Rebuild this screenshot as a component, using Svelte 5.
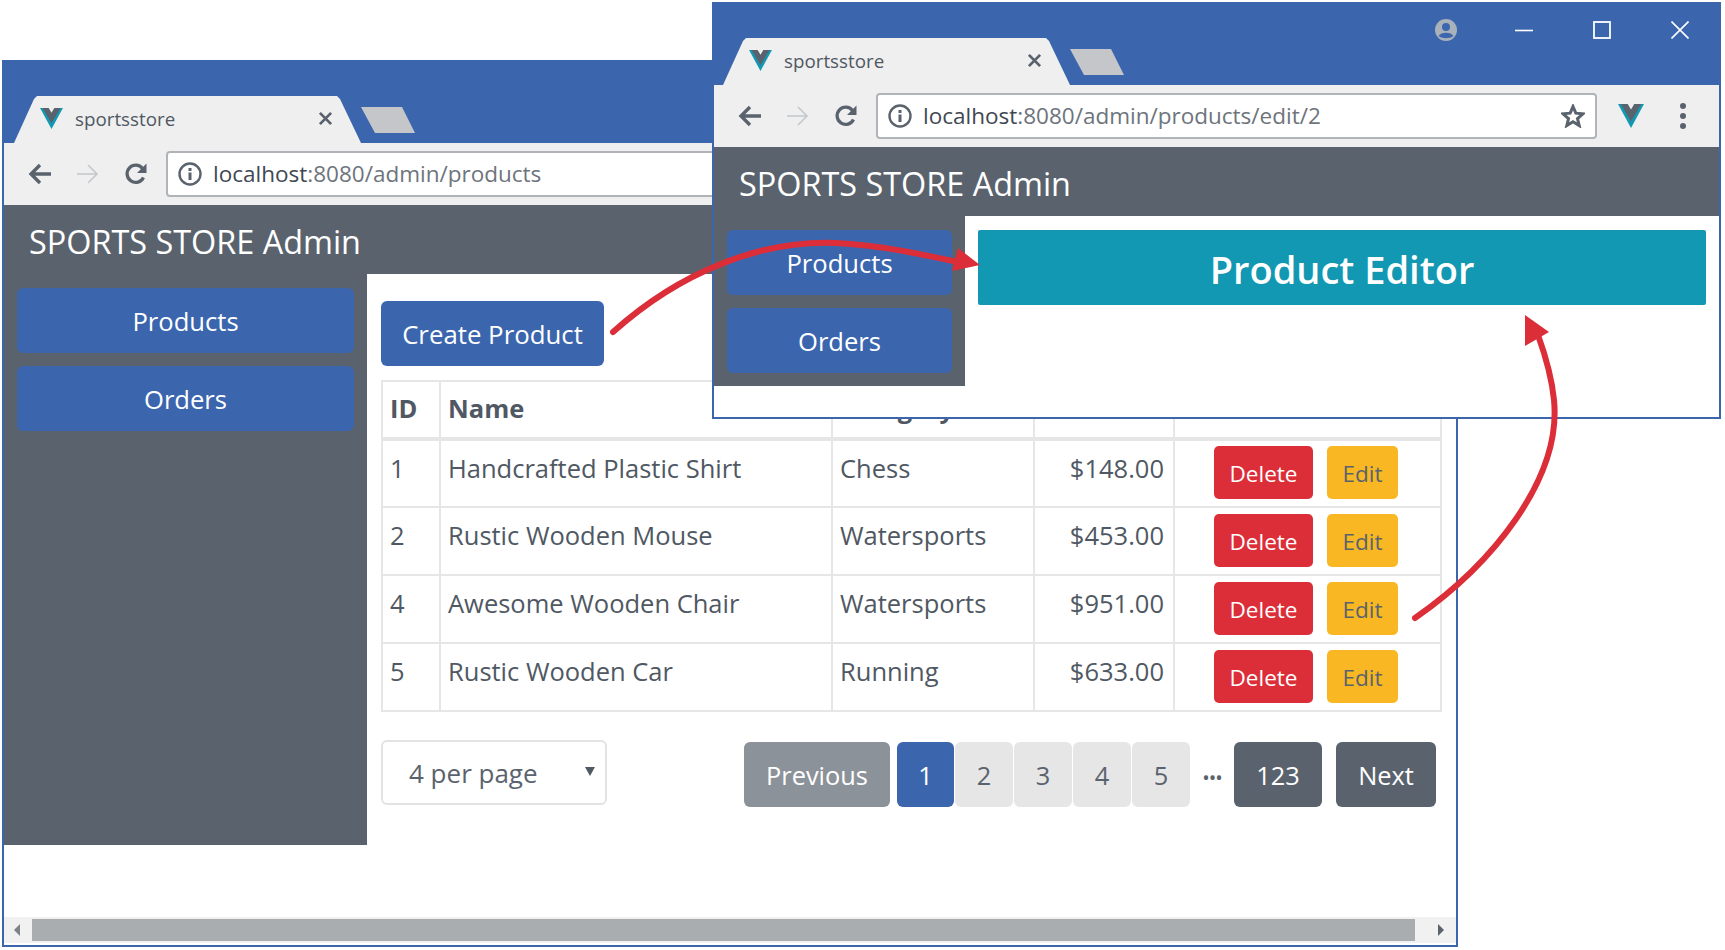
<script>
  const rows = [
    { id: 1, name: 'Handcrafted Plastic Shirt', category: 'Chess', price: '$148.00' },
    { id: 2, name: 'Rustic Wooden Mouse', category: 'Watersports', price: '$453.00' },
    { id: 4, name: 'Awesome Wooden Chair', category: 'Watersports', price: '$951.00' },
    { id: 5, name: 'Rustic Wooden Car', category: 'Running', price: '$633.00' }
  ];
</script>

{#snippet vue(cls)}
  <svg class={cls} viewBox="0 0 24 22">
    <path d="M0 0H8L12 7L16 0H24L12 22Z" fill="#1298b2" />
    <path d="M2.5 0H9L12 5L15 0H21.5L12 16Z" fill="#5a636d" />
  </svg>
{/snippet}

{#snippet chrome(host, path)}
  <div class="titlebar">
    <div class="tab">
      {@render vue('favicon')}
      <span class="tabtitle">sportsstore</span>
      <svg class="tabclose" viewBox="0 0 16 16"><path d="M2 2L14 14M14 2L2 14" stroke="#5a636d" stroke-width="3" /></svg>
    </div>
    <div class="newtab"></div>
    <div class="caption">
      <svg class="cap-account" viewBox="0 0 22 22">
        <circle cx="11" cy="11" r="11" fill="#a9b1bb" />
        <circle cx="11" cy="8" r="4" fill="#3b66ae" />
        <path d="M3.5 17C6 12.5 16 12.5 18.5 17C14 20 8 20 3.5 17Z" fill="#3b66ae" />
      </svg>
      <svg class="cap-btn" viewBox="0 0 18 18"><path d="M0 9.5H18" stroke="#fff" stroke-width="1.6" /></svg>
      <svg class="cap-btn" viewBox="0 0 18 18"><rect x="1" y="1" width="16" height="16" fill="none" stroke="#fff" stroke-width="1.8" /></svg>
      <svg class="cap-btn" viewBox="0 0 18 18"><path d="M0.5 0.5L17.5 17.5M17.5 0.5L0.5 17.5" stroke="#fff" stroke-width="1.6" /></svg>
    </div>
  </div>
  <div class="toolbar">
    <svg class="tool" viewBox="0 0 24 24"><path d="M23 12H4M12 3L3 12L12 21" fill="none" stroke="#5a636d" stroke-width="3.4" /></svg>
    <svg class="tool" viewBox="0 0 24 24"><path d="M1 12H20M12 3L21 12L12 21" fill="none" stroke="#c4c8cc" stroke-width="1.6" /></svg>
    <svg class="tool" viewBox="0 0 24 24">
      <path d="M19.5 15.5A8.6 8.6 0 1 1 18.5 6.5" fill="none" stroke="#5a636d" stroke-width="3.2" />
      <path d="M22.5 1.5V11H13Z" fill="#5a636d" />
    </svg>
    <div class="address">
      <svg class="info" viewBox="0 0 24 24">
        <circle cx="12" cy="12" r="10.5" fill="none" stroke="#5a636d" stroke-width="2.4" />
        <rect x="10.5" y="10.5" width="3" height="7.5" fill="#5a636d" />
        <rect x="10.5" y="6" width="3" height="3" fill="#5a636d" />
      </svg>
      <span class="url"><span class="host">{host}</span>{path}</span>
      <svg class="star" viewBox="0 0 24 24"><path d="M12 2.5L14.8 9.2L22 9.8L16.5 14.5L18.2 21.6L12 17.8L5.8 21.6L7.5 14.5L2 9.8L9.2 9.2Z" fill="none" stroke="#5a636d" stroke-width="3" /></svg>
    </div>
    {@render vue('ext')}
    <div class="menu"><i></i><i></i><i></i></div>
  </div>
  <header class="brand">SPORTS STORE Admin</header>
{/snippet}

{#snippet nav()}
  <nav class="side">
    <button class="navbtn">Products</button>
    <button class="navbtn">Orders</button>
  </nav>
{/snippet}

<div class="canvas">
  <section class="window back">
    {@render chrome('localhost', ':8080/admin/products')}
    <div class="body">
      {@render nav()}
      <main class="main">
        <button class="create">Create Product</button>
        <table>
          <colgroup>
            <col class="c1" /><col class="c2" /><col class="c3" /><col class="c4" /><col class="c5" />
          </colgroup>
          <thead>
            <tr><th>ID</th><th>Name</th><th>Category</th><th class="right">Price</th><th></th></tr>
          </thead>
          <tbody>
            {#each rows as r}
              <tr>
                <td>{r.id}</td>
                <td>{r.name}</td>
                <td>{r.category}</td>
                <td class="right">{r.price}</td>
                <td class="actions">
                  <button class="del">Delete</button>
                  <button class="edit">Edit</button>
                </td>
              </tr>
            {/each}
          </tbody>
        </table>
        <div class="footer">
          <div class="select">4 per page<span class="caret"></span></div>
          <div class="pager">
            <button class="pg prev">Previous</button>
            <div class="nums">
              <button class="pg num active">1</button>
              <button class="pg num">2</button>
              <button class="pg num">3</button>
              <button class="pg num">4</button>
              <button class="pg num">5</button>
            </div>
            <span class="dots">•••</span>
            <button class="pg dark">123</button>
            <button class="pg dark next">Next</button>
          </div>
        </div>
      </main>
    </div>
    <div class="scrollbar">
      <span class="arrow left"></span>
      <div class="thumb"></div>
      <span class="arrow rightA"></span>
    </div>
  </section>

  <section class="window front">
    {@render chrome('localhost', ':8080/admin/products/edit/2')}
    <div class="body">
      {@render nav()}
      <main class="main editor">
        <h1>Product Editor</h1>
      </main>
    </div>
  </section>

  <svg class="arrows" viewBox="0 0 1725 950">
    <path d="M613 332C680 272 760 240 836 243C880 245 925 255 962 263" fill="none" stroke="#dc2e39" stroke-width="6" stroke-linecap="round" />
    <path d="M980 265L958 248L952 271Z" fill="#dc2e39" />
    <path d="M1415 618C1490 566 1562 480 1554 400C1552 380 1547 360 1538 335" fill="none" stroke="#dc2e39" stroke-width="6" stroke-linecap="round" />
    <path d="M1525 315L1525 346L1549 332Z" fill="#dc2e39" />
  </svg>
</div>

<style>
  :global(body) { margin: 0; background: #fff; }
  .canvas {
    position: relative;
    width: 1725px;
    height: 950px;
    overflow: hidden;
    background: #fff;
    font-family: "Open Sans", "Noto Sans", sans-serif;
    color: #4f5863;
  }
  button { font-family: inherit; border: 0; padding: 0; color: #fff; }

  .window {
    position: absolute;
    box-sizing: border-box;
    display: flex;
    flex-direction: column;
    background: #fff;
    border: 2px solid #3b66ae;
    border-top: 0;
  }
  .back { left: 2px; top: 60px; width: 1456px; height: 887px; }
  .front { left: 712px; top: 2px; width: 1009px; height: 417px; }

  .titlebar {
    height: 83px;
    flex: none;
    display: flex;
    align-items: flex-end;
    background: #3b66ae;
    padding-left: 10px;
    position: relative;
  }
  .front .titlebar { padding-left: 9px; }
  .tab {
    width: 347px;
    height: 47px;
    box-sizing: border-box;
    padding: 0 28px 2px 26px;
    display: flex;
    align-items: center;
    background: #efefef;
    clip-path: polygon(0 100%, 20px 3px, 23px 0, 323px 0, 326px 3px, 347px 100%);
  }
  .favicon { width: 23px; height: 21px; margin-right: 12px; flex: none; }
  .tabtitle { font-size: 18.8px; color: #4f5863; flex: 1; }
  .tabclose { width: 15px; height: 15px; flex: none; }
  .newtab {
    width: 54px;
    height: 26px;
    margin: 0 0 10px 0;
    background: #c4c6c9;
    clip-path: polygon(0 0, 41px 0, 100% 100%, 14px 100%);
  }
  .caption {
    margin-left: auto;
    align-self: flex-start;
    display: flex;
    align-items: center;
    padding: 17px 30px 0 0;
    gap: 60px;
  }
  .cap-account { width: 22px; height: 22px; margin-right: -2px; }
  .cap-btn { width: 18px; height: 18px; }

  .toolbar {
    height: 62px;
    flex: none;
    box-sizing: border-box;
    background: #efefef;
    display: flex;
    align-items: center;
    padding: 0 32px 0 24px;
    gap: 24px;
  }
  .tool { width: 24px; height: 24px; flex: none; }
  .address {
    flex: 1;
    height: 46px;
    margin: 0 0 0 -6px;
    box-sizing: border-box;
    display: flex;
    align-items: center;
    background: #fff;
    border: 2px solid #b0b3b7;
    border-radius: 4px;
    padding: 0 10px 0 10px;
  }
  .info { width: 24px; height: 24px; flex: none; margin-right: 11px; }
  .url { flex: 1; font-size: 22.5px; color: #6d747c; white-space: nowrap; padding-bottom: 2px; }
  .host { color: #3f4852; }
  .star { width: 24px; height: 24px; flex: none; }
  .ext { width: 26px; height: 24px; flex: none; margin-left: -3px; }
  .menu { width: 8px; display: flex; flex-direction: column; align-items: center; gap: 4px; margin-left: 11px; flex: none; }
  .menu i { display: block; width: 6px; height: 6px; border-radius: 50%; background: #5a636d; }

  .brand {
    height: 69px;
    flex: none;
    box-sizing: border-box;
    background: #5a636d;
    color: #fff;
    font-size: 32.4px;
    line-height: 73px;
    padding-left: 25px;
  }
  .body { display: flex; flex: 1; align-items: flex-start; min-height: 0; }
  .side {
    flex: none;
    box-sizing: border-box;
    width: 363px;
    background: #5a636d;
    padding: 14px 13px 13px;
    display: flex;
    flex-direction: column;
    gap: 13px;
  }
  .back .side { height: 571px; }
  .front .side { width: 251px; }
  .navbtn {
    height: 65px;
    box-sizing: border-box;
    padding-top: 2px;
    background: #3b66ae;
    border-radius: 6px;
    font-size: 25.6px;
  }
  .main { flex: 1; box-sizing: border-box; padding: 27px 14px 0; min-width: 0; }
  .create {
    display: block;
    width: 223px;
    height: 65px;
    background: #3b66ae;
    border-radius: 6px;
    font-size: 25.8px;
  }
  table {
    width: 1061px;
    margin-top: 14px;
    border-collapse: collapse;
    table-layout: fixed;
    font-size: 25.5px;
  }
  .c1 { width: 58px; }
  .c2 { width: 392px; }
  .c3 { width: 202px; }
  .c4 { width: 140px; }
  th, td {
    border: 2px solid #e6e6e6;
    padding: 10px 9px 10px 7px;
    text-align: left;
    vertical-align: top;
    line-height: 34px;
    box-sizing: border-box;
  }
  th { font-weight: 700; height: 58px; border-bottom-width: 4px; vertical-align: middle; padding-top: 5px; padding-bottom: 9px; }
  td { height: 68px; }
  .right { text-align: right; }
  td.actions { padding: 4px 3px 6px 0; text-align: center; font-size: 0; line-height: 0; vertical-align: middle; }
  .del, .edit { height: 53px; border-radius: 5px; font-size: 22.5px; padding-top: 2px; }
  .del { width: 99px; background: #dc2e39; margin-right: 14px; }
  .edit { width: 71px; background: #f9b823; color: #5a636d; }

  .footer {
    width: 1055px;
    margin-top: 28px;
    display: flex;
    justify-content: space-between;
    align-items: flex-start;
  }
  .select {
    position: relative;
    width: 226px;
    height: 65px;
    box-sizing: border-box;
    border: 2px solid #e3e3e3;
    border-radius: 6px;
    padding-left: 26px;
    line-height: 62px;
    font-size: 26px;
    color: #5a636d;
  }
  .caret {
    position: absolute;
    right: 10px;
    top: 25px;
    border-left: 5px solid transparent;
    border-right: 5px solid transparent;
    border-top: 9px solid #4f5863;
  }
  .pager { display: flex; align-items: center; margin-top: 2px; }
  .pg { height: 65px; border-radius: 6px; font-size: 25.4px; flex: none; }
  .prev { width: 146px; background: #8c9299; }
  .nums { display: flex; gap: 1px; margin-left: 7px; }
  .num { width: 58px; background: #e6e6e6; color: #5a636d; }
  .active { width: 57px; background: #3b66ae; color: #fff; }
  .dots { width: 44px; text-align: center; font-size: 20px; letter-spacing: -1px; color: #5a636d; padding-top: 6px; }
  .dark { width: 88px; background: #5a636d; }
  .next { width: 100px; margin-left: 14px; }

  .scrollbar {
    flex: none;
    height: 26px;
    margin-bottom: 2px;
    display: flex;
    align-items: center;
    background: #f1f1f1;
  }
  .thumb { height: 22px; width: 1383px; margin: 0 23px 0 12px; background: #a9adb0; }
  .arrow { width: 0; height: 0; border-top: 6px solid transparent; border-bottom: 6px solid transparent; }
  .left { margin-left: 10px; border-right: 6px solid #7d8389; }
  .rightA { border-left: 6px solid #5a636d; }

  .editor { padding: 14px 13px 0; }
  h1 {
    margin: 0;
    height: 75px;
    background: #1298b2;
    color: #fff;
    border-radius: 2px;
    text-align: center;
    font-size: 38px;
    font-weight: 600;
    line-height: 78px;
  }
  .arrows { position: absolute; left: 0; top: 0; width: 1725px; height: 950px; pointer-events: none; }
</style>
